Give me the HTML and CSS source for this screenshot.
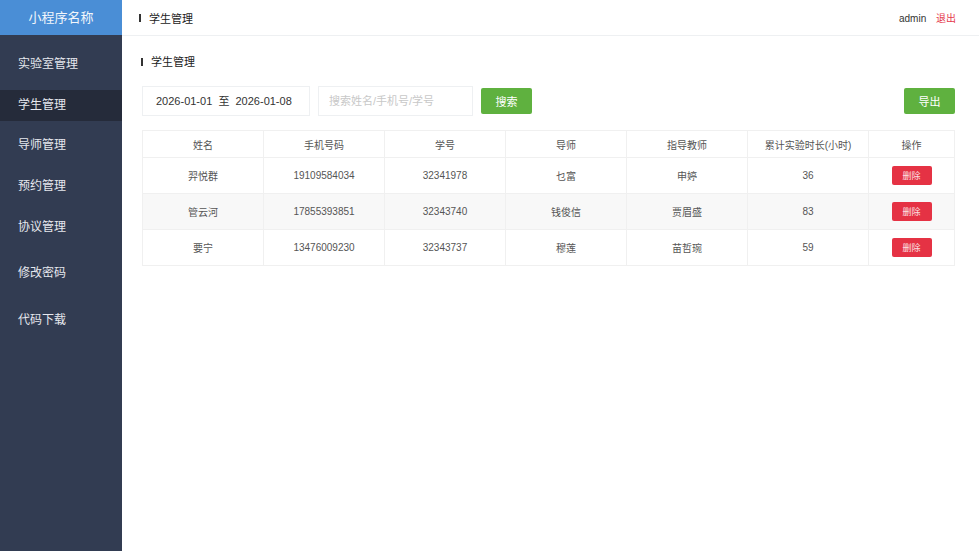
FILE: index.html
```html
<!DOCTYPE html>
<html lang="zh-CN">
<head>
    <meta charset="UTF-8">
    <meta name="viewport" content="width=device-width, initial-scale=1.0">
    <title>学生管理</title>
    <link rel="stylesheet" href="styles.css">
</head>
<body>

    <div class="layout">
        <aside class="sidebar">
            <div class="logo">小程序名称</div>
            <ul class="menu">
                <li class="menu-item">实验室管理</li>
                <li class="menu-item active">学生管理</li>
                <li class="menu-item">导师管理</li>
                <li class="menu-item">预约管理</li>
                <li class="menu-item">协议管理</li>
                <li class="menu-item wide">修改密码</li>
                <li class="menu-item wider">代码下载</li>
            </ul>
        </aside>

        <main class="main">
            <header class="topbar">
                <div class="title">学生管理</div>
                <div class="user">
                    <span class="user-name">admin</span>
                    <a class="logout">退出</a>
                </div>
            </header>

            <section class="content">
                <div class="title section-title">学生管理</div>

                <div class="toolbar">
                    <div class="date-range">2026-01-01 &nbsp;至&nbsp; 2026-01-08</div>
                    <input class="search-input" type="text" placeholder="搜索姓名/手机号/学号">
                    <button class="btn btn-green">搜索</button>
                    <button class="btn btn-green btn-right">导出</button>
                </div>

                <table class="data-table">
                    <colgroup>
                        <col class="col-std">
                        <col class="col-std">
                        <col class="col-std">
                        <col class="col-std">
                        <col class="col-std">
                        <col class="col-std">
                        <col class="col-op">
                    </colgroup>
                    <thead>
                        <tr>
                            <th>姓名</th>
                            <th>手机号码</th>
                            <th>学号</th>
                            <th>导师</th>
                            <th>指导教师</th>
                            <th>累计实验时长(小时)</th>
                            <th>操作</th>
                        </tr>
                    </thead>
                    <tbody>
                        <tr>
                            <td>羿悦群</td>
                            <td>19109584034</td>
                            <td>32341978</td>
                            <td>乜富</td>
                            <td>申婷</td>
                            <td>36</td>
                            <td><button class="btn-del">删除</button></td>
                        </tr>
                        <tr>
                            <td>管云河</td>
                            <td>17855393851</td>
                            <td>32343740</td>
                            <td>钱俊信</td>
                            <td>贾眉盛</td>
                            <td>83</td>
                            <td><button class="btn-del">删除</button></td>
                        </tr>
                        <tr>
                            <td>要宁</td>
                            <td>13476009230</td>
                            <td>32343737</td>
                            <td>穆莲</td>
                            <td>苗哲琬</td>
                            <td>59</td>
                            <td><button class="btn-del">删除</button></td>
                        </tr>
                    </tbody>
                </table>
            </section>
        </main>
    </div>

</body>
</html>
```

FILE: styles.css
```css
* {
    box-sizing: border-box;
}
body {
    margin: 0;
    font-family: "Liberation Sans", "Noto Sans CJK SC", sans-serif;
    color: #333;
    background-color: #fff;
}
.layout {
    display: flex;
    height: 551px;
}
.sidebar {
    width: 122px;
    flex-shrink: 0;
    background-color: #323c52;
}
.logo {
    height: 35px;
    line-height: 35px;
    text-align: center;
    background-color: #4a8ed6;
    color: #f2f6fb;
    font-size: 13px;
}
.menu {
    list-style: none;
    margin: 0;
    padding: 9px 0 0;
}
.menu-item {
    height: 41px;
    line-height: 41px;
    padding-left: 18px;
    color: #e6e8ee;
    font-size: 12px;
}
.menu-item.active {
    background-color: #252b3a;
    height: 31px;
    line-height: 31px;
    margin: 5px 0 4px;
}
.menu-item.wide {
    margin-top: 5px;
}
.menu-item.wider {
    margin-top: 6px;
}
.main {
    flex: 1;
    display: flex;
    flex-direction: column;
}
.topbar {
    height: 36px;
    border-bottom: 1px solid #eef0f2;
    display: flex;
    align-items: center;
    justify-content: space-between;
    padding: 0 25px 0 17px;
}
.title {
    position: relative;
    padding-left: 10px;
    font-size: 11px;
    color: #222;
}
.title::before {
    content: "";
    position: absolute;
    left: 0;
    top: 50%;
    width: 2px;
    height: 8px;
    margin-top: -4px;
    background-color: #333;
}
.user {
    font-size: 10px;
    color: #333;
}
.logout {
    margin-left: 7px;
    color: #e5394c;
}
.content {
    padding: 18px 26px 0 19px;
}
.section-title {
    height: 16px;
    line-height: 16px;
}
.toolbar {
    display: flex;
    align-items: center;
    margin-top: 15px;
    height: 31px;
    padding-left: 1px;
}
.date-range {
    width: 168px;
    height: 30px;
    line-height: 28px;
    border: 1px solid #eef0f2;
    font-size: 11px;
    color: #333;
    padding-left: 13px;
}
.search-input {
    width: 155px;
    height: 30px;
    margin-left: 8px;
    border: 1px solid #eef0f2;
    padding: 0 10px;
    font-family: inherit;
    font-size: 11px;
    outline: none;
}
.search-input::placeholder {
    color: #c8c8c8;
}
.btn {
    height: 26px;
    width: 51px;
    border: none;
    border-radius: 2px;
    font-family: inherit;
    font-size: 11px;
    color: #fff;
    cursor: pointer;
    margin-left: 8px;
}
.btn-green {
    background-color: #5fb13f;
}
.btn-right {
    margin-left: auto;
}
.data-table {
    width: 812px;
    table-layout: fixed;
    margin-top: 14px;
    margin-left: 1px;
    border-collapse: collapse;
    font-size: 10px;
    color: #555;
}
.col-std {
    width: 121px;
}
.col-op {
    width: 86px;
}
.data-table th,
.data-table td {
    border: 1px solid #f0f0f0;
    text-align: center;
    font-weight: normal;
}
.data-table th {
    height: 27px;
}
.data-table td {
    height: 36px;
}
.data-table tbody tr:nth-child(2) {
    background-color: #f8f8f8;
}
.btn-del {
    width: 40px;
    height: 19px;
    border: none;
    border-radius: 2px;
    background-color: #e53244;
    color: #fbe0e3;
    font-family: inherit;
    font-size: 9px;
    cursor: pointer;
}
```
